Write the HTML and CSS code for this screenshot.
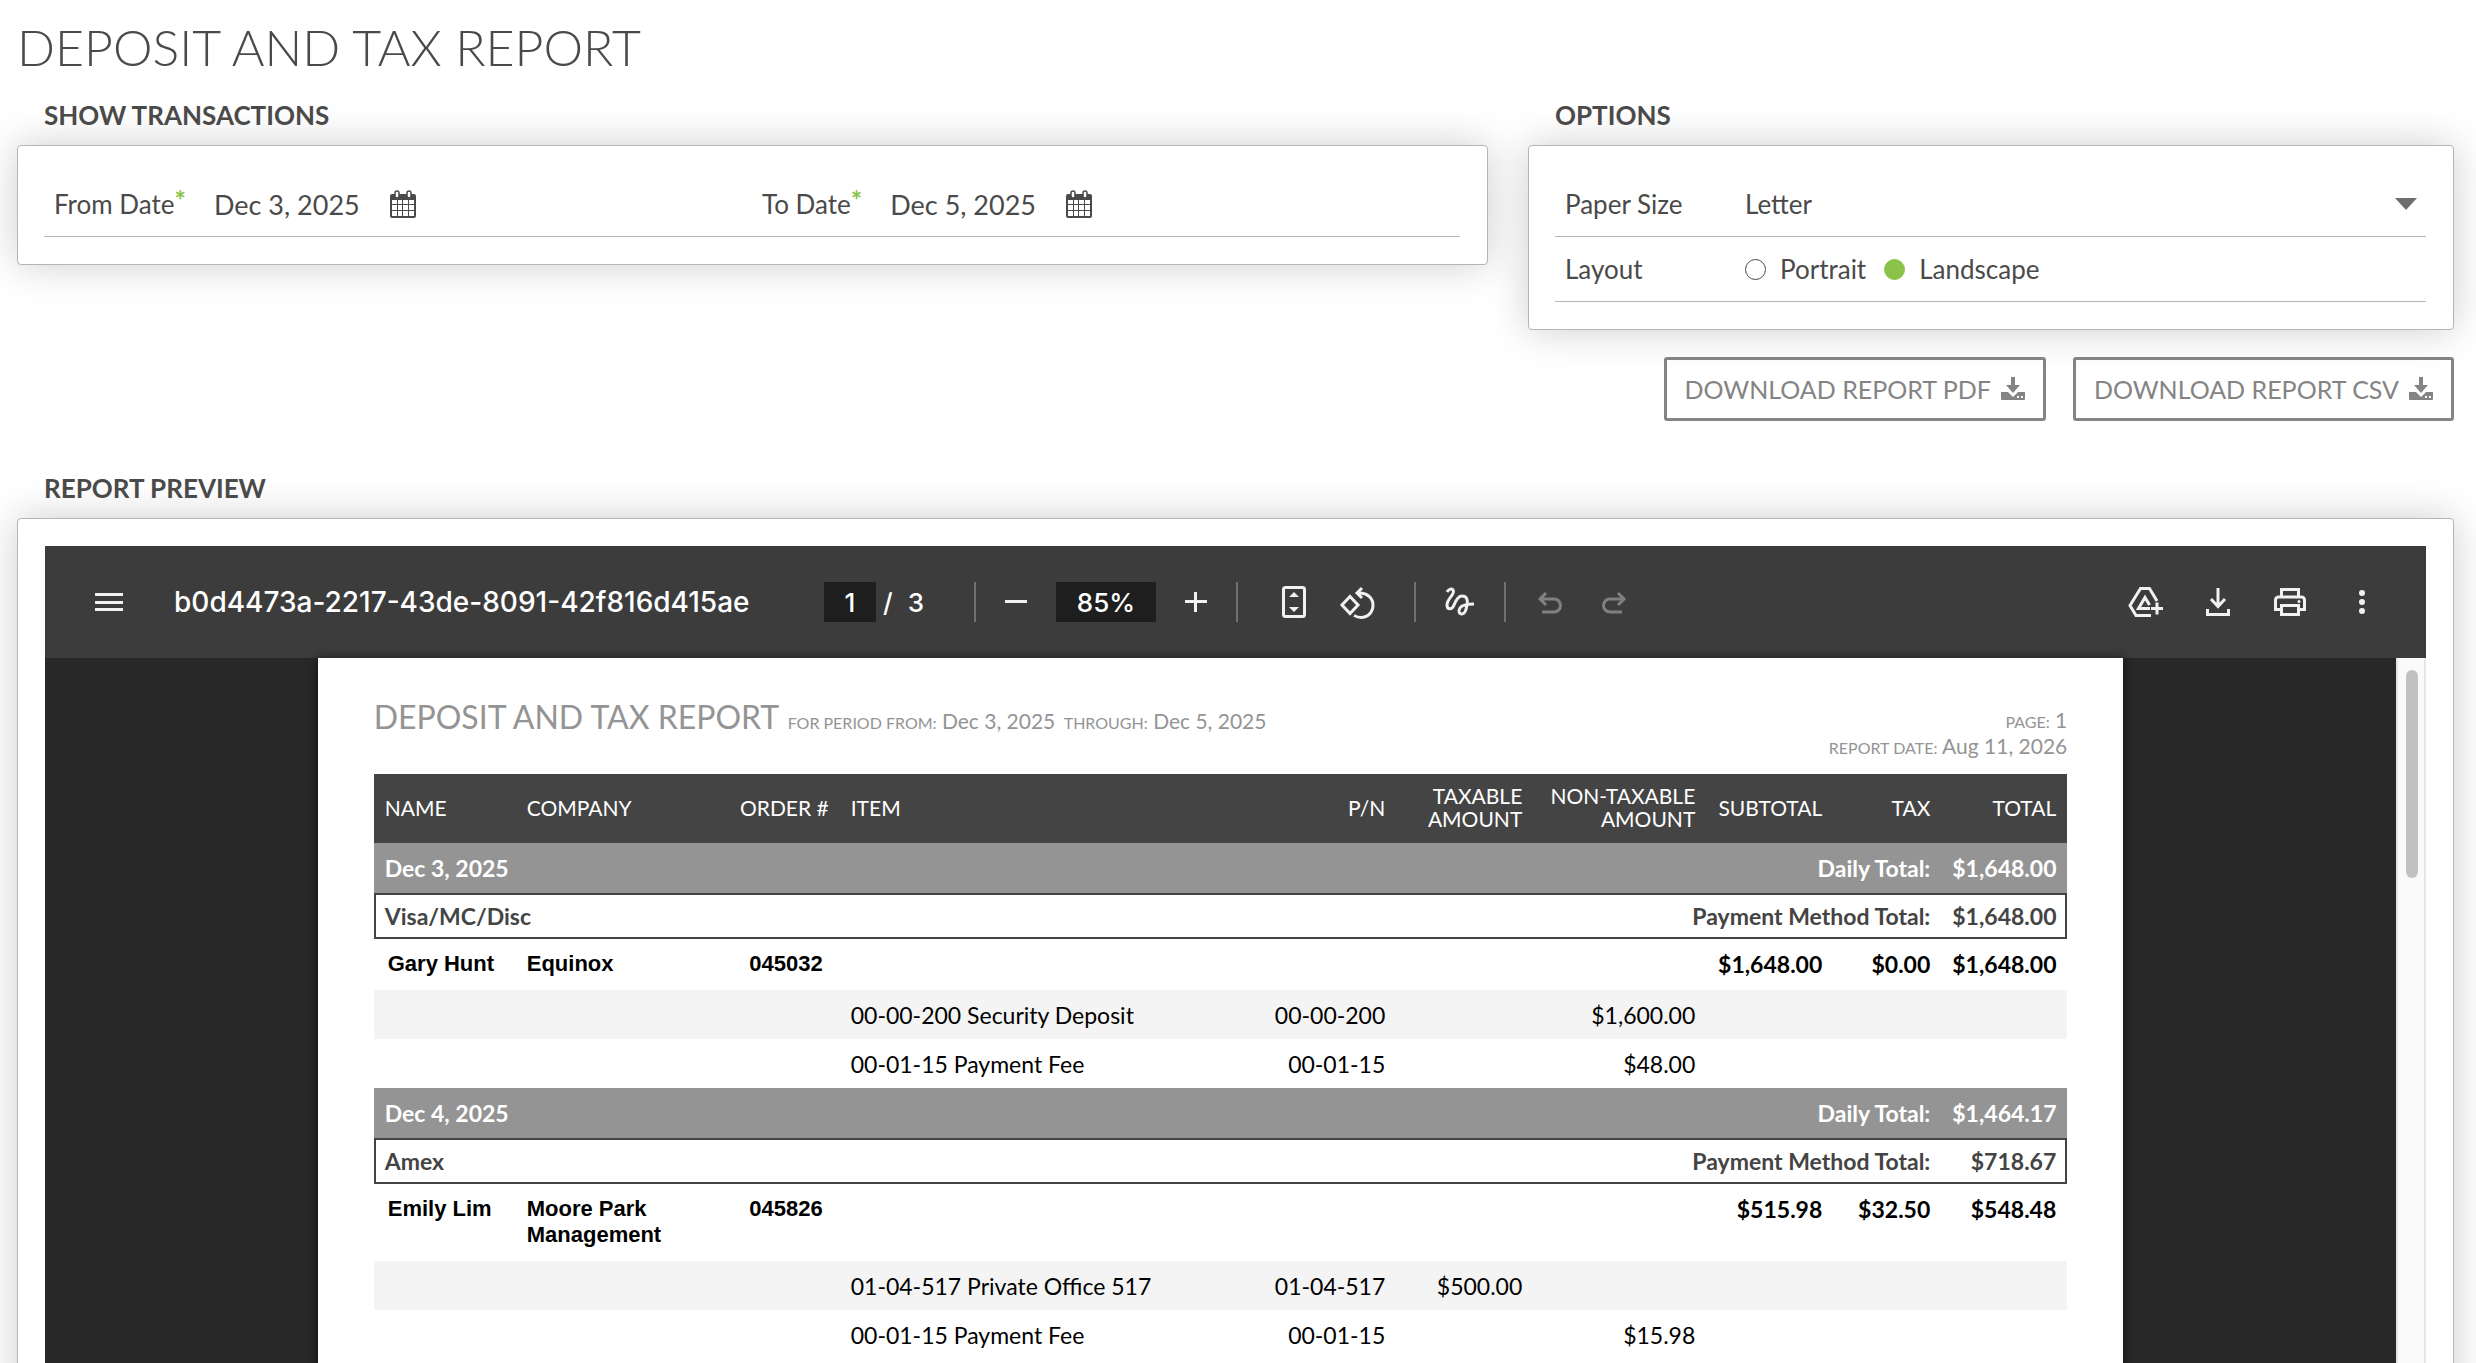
FILE: index.html
```html
<!DOCTYPE html>
<html lang="en">
<head>
  <meta charset="UTF-8">
  <meta name="viewport" content="width=device-width, initial-scale=1.0">
  <title>Deposit and Tax Report</title>
  <link rel="stylesheet" href="styles.css">
</head>
<body>
  <h1>DEPOSIT AND TAX REPORT</h1>

  <div class="filters">
    <section>
      <h2>SHOW TRANSACTIONS</h2>
      <div class="card">
        <div class="row dates">
          <div class="field">
            <label for="from-date">From Date<sup>*</sup></label>
            <input type="text" id="from-date" value="Dec 3, 2025">
            <button class="cal-btn" aria-label="Pick from date">
              <svg width="28" height="28" viewBox="0 0 28 28"><path fill="#4a4a4a" d="M3 4h22a2 2 0 0 1 2 2v20a2 2 0 0 1-2 2H3a2 2 0 0 1-2-2V6a2 2 0 0 1 2-2z"/><path fill="#fff" d="M3 10h5v4H3zm6 0h4v4H9zm5 0h5v4h-5zm6 0h5v4h-5zM3 15h5v5H3zm6 0h4v5H9zm5 0h5v5h-5zm6 0h5v5h-5zM3 21h5v5H3zm6 0h4v5H9zm5 0h5v5h-5zm6 0h5v5h-5z"/><path fill="#fff" stroke="#4a4a4a" stroke-width="1.5" d="M6 3a2 2 0 0 1 4 0v3a2 2 0 0 1-4 0zm12 0a2 2 0 0 1 4 0v3a2 2 0 0 1-4 0z"/></svg>
            </button>
          </div>
          <div class="field">
            <label for="to-date">To Date<sup>*</sup></label>
            <input type="text" id="to-date" value="Dec 5, 2025">
            <button class="cal-btn" aria-label="Pick to date">
              <svg width="28" height="28" viewBox="0 0 28 28"><path fill="#4a4a4a" d="M3 4h22a2 2 0 0 1 2 2v20a2 2 0 0 1-2 2H3a2 2 0 0 1-2-2V6a2 2 0 0 1 2-2z"/><path fill="#fff" d="M3 10h5v4H3zm6 0h4v4H9zm5 0h5v4h-5zm6 0h5v4h-5zM3 15h5v5H3zm6 0h4v5H9zm5 0h5v5h-5zm6 0h5v5h-5zM3 21h5v5H3zm6 0h4v5H9zm5 0h5v5h-5zm6 0h5v5h-5z"/><path fill="#fff" stroke="#4a4a4a" stroke-width="1.5" d="M6 3a2 2 0 0 1 4 0v3a2 2 0 0 1-4 0zm12 0a2 2 0 0 1 4 0v3a2 2 0 0 1-4 0z"/></svg>
            </button>
          </div>
        </div>
      </div>
    </section>

    <section>
      <h2>OPTIONS</h2>
      <div class="card">
        <div class="row option">
          <label for="paper-size">Paper Size</label>
          <div class="select-wrap">
            <select id="paper-size">
              <option>Letter</option>
              <option>A4</option>
            </select>
            <svg width="24" height="12" viewBox="0 0 24 12"><path fill="#6e6e6e" d="M1 0h22L12 12z"/></svg>
          </div>
        </div>
        <div class="row option">
          <span>Layout</span>
          <div class="radios">
            <label><input type="radio" name="layout"> Portrait</label>
            <label><input type="radio" name="layout" checked> Landscape</label>
          </div>
        </div>
      </div>
      <div class="downloads">
        <button>DOWNLOAD REPORT PDF
          <svg width="24" height="24" viewBox="0 0 24 24" fill="#848484"><path d="M10 0h4v8h5l-7 8-7-8h5z"/><path fill-rule="evenodd" d="M0 15h7l5 5 5-5h7v7a1 1 0 0 1-1 1H1a1 1 0 0 1-1-1zm16 4v2h2v-2zm4 0v2h2v-2z"/></svg>
        </button>
        <button>DOWNLOAD REPORT CSV
          <svg width="24" height="24" viewBox="0 0 24 24" fill="#848484"><path d="M10 0h4v8h5l-7 8-7-8h5z"/><path fill-rule="evenodd" d="M0 15h7l5 5 5-5h7v7a1 1 0 0 1-1 1H1a1 1 0 0 1-1-1zm16 4v2h2v-2zm4 0v2h2v-2z"/></svg>
        </button>
      </div>
    </section>
  </div>

  <section class="preview">
    <h2>REPORT PREVIEW</h2>
    <div class="card viewer-card">
      <div class="toolbar">
        <div class="tools-left">
          <button aria-label="Menu">
            <svg width="28" height="20" viewBox="0 0 28 20" fill="#f1f1f1"><path d="M0 1h28v3H0zm0 8h28v3H0zm0 7h28v3H0z"/></svg>
          </button>
          <span class="file-name">b0d4473a-2217-43de-8091-42f816d415ae</span>
        </div>
        <div class="tools-mid">
          <input class="page-input" type="text" value="1" aria-label="Page">
          <span class="page-count"><span>/</span><span>3</span></span>
          <i class="sep"></i>
          <button aria-label="Zoom out"><svg width="40" height="40" viewBox="0 0 40 40" fill="#f1f1f1"><path d="M9 18h22v3H9z"/></svg></button>
          <input class="zoom-input" type="text" value="85%" aria-label="Zoom">
          <button class="zoom-in" aria-label="Zoom in"><svg width="40" height="40" viewBox="0 0 40 40" fill="#f1f1f1"><path d="M9 18h9V10h3v8h10v3H21v9h-3v-9H9z"/></svg></button>
          <i class="sep"></i>
          <button class="fit" aria-label="Fit to page"><svg width="40" height="40" viewBox="0 0 40 40"><rect x="9.5" y="5.5" width="21" height="29" rx="2" fill="none" stroke="#f1f1f1" stroke-width="3"/><path fill="#f1f1f1" d="M20 10l5 5H15zm0 20l5-5H15z"/></svg></button>
          <button class="rotate" aria-label="Rotate"><svg width="40" height="40" viewBox="0 0 40 40" fill="none" stroke="#f1f1f1" stroke-width="3"><path d="M12 14.500l8 8.500-8 8.500-8-8.500z"/><path d="M24 6l-5 5 5 5M20 11h2c7 0 13 5 13 12s-5 12.500-12 12.500c-3 0-5-1-7-2"/></svg></button>
          <i class="sep"></i>
          <button class="draw" aria-label="Draw"><svg width="40" height="40" viewBox="0 0 40 40" fill="none" stroke="#f1f1f1" stroke-width="3"><path d="M7 10c2-3 5-4 6-2 3 4-6 8-6 15 0 5 5 5 7 0 2-5 4-9 8-9 5 0 6 4 5 9-1 6-3 9-5 9-3 0-4-3-2-6 2-3 6-4 14-4"/></svg></button>
          <i class="sep"></i>
          <button class="undo" aria-label="Undo"><svg width="40" height="40" viewBox="0 0 40 40" fill="none" stroke="#808080" stroke-width="3"><path d="M16 11l-6 6 6 6M10 17h14a6.500 6.500 0 0 1 0 13H12"/></svg></button>
          <button class="redo" aria-label="Redo"><svg width="40" height="40" viewBox="0 0 40 40" fill="none" stroke="#808080" stroke-width="3"><path d="M24 11l6 6-6 6M30 17H16a6.500 6.500 0 0 0 0 13h12"/></svg></button>
        </div>
        <div class="tools-right">
          <button aria-label="Save to Drive"><svg width="40" height="40" viewBox="0 0 40 40" fill="none" stroke="#f1f1f1" stroke-width="3"><path d="M25 33.500H10l-6-10L14.500 6.500h9L31 19"/><path d="M24 26.500H12.500l6.500-11 4.500 7.500M31 20.500v12M25 26.500h12"/></svg></button>
          <button aria-label="Download"><svg width="40" height="40" viewBox="0 0 40 40" fill="none" stroke="#f1f1f1" stroke-width="3"><path d="M20 6v19M13 17l7 7.500 7-7.500M9.500 27v5.500h21V27"/></svg></button>
          <button aria-label="Print"><svg width="40" height="40" viewBox="0 0 40 40" fill="none" stroke="#f1f1f1" stroke-width="3"><path d="M11.500 15V7.500h17V15M11.500 27.500h-6V18a3 3 0 0 1 3-3h23a3 3 0 0 1 3 3v9.500h-6"/><path d="M11.500 23.500h17v9h-17z"/><circle cx="29" cy="19.500" r="1.500" fill="#f1f1f1" stroke="none"/></svg></button>
          <button aria-label="More"><svg width="40" height="40" viewBox="0 0 40 40" fill="#f1f1f1"><circle cx="20" cy="11" r="3"/><circle cx="20" cy="20" r="3"/><circle cx="20" cy="29" r="3"/></svg></button>
        </div>
      </div>

      <div class="viewport">
        <div class="stage">
          <div class="paper">
            <div class="doc-head">
              <div><span class="doc-title">DEPOSIT AND TAX REPORT</span> <small>FOR PERIOD FROM:</small> Dec 3, 2025 <small>THROUGH:</small> Dec 5, 2025</div>
              <div class="doc-meta"><small>PAGE:</small> 1<br><small>REPORT DATE:</small> Aug 11, 2026</div>
            </div>
            <table>
              <colgroup>
                <col class="c-name"><col class="c-company"><col class="c-order"><col><col class="c-pn"><col class="c-taxable"><col class="c-nontax"><col class="c-sub"><col class="c-tax"><col class="c-total">
              </colgroup>
              <thead>
                <tr>
                  <th class="l">NAME</th><th class="l">COMPANY</th><th>ORDER #</th><th class="l">ITEM</th><th>P/N</th><th>TAXABLE AMOUNT</th><th>NON-TAXABLE AMOUNT</th><th>SUBTOTAL</th><th>TAX</th><th>TOTAL</th>
                </tr>
              </thead>
              <tbody>
                <tr class="day"><td class="l" colspan="5">Dec 3, 2025</td><td colspan="4">Daily Total:</td><td>$1,648.00</td></tr>
                <tr class="method"><td class="l" colspan="5">Visa/MC/Disc</td><td colspan="4">Payment Method Total:</td><td>$1,648.00</td></tr>
                <tr class="customer"><td class="l who">Gary Hunt</td><td class="l org">Equinox</td><td class="num">045032</td><td></td><td></td><td></td><td></td><td>$1,648.00</td><td>$0.00</td><td>$1,648.00</td></tr>
                <tr class="item shade"><td></td><td></td><td></td><td class="l">00-00-200 Security Deposit</td><td>00-00-200</td><td></td><td>$1,600.00</td><td></td><td></td><td></td></tr>
                <tr class="item"><td></td><td></td><td></td><td class="l">00-01-15 Payment Fee</td><td>00-01-15</td><td></td><td>$48.00</td><td></td><td></td><td></td></tr>
                <tr class="day"><td class="l" colspan="5">Dec 4, 2025</td><td colspan="4">Daily Total:</td><td>$1,464.17</td></tr>
                <tr class="method"><td class="l" colspan="5">Amex</td><td colspan="4">Payment Method Total:</td><td>$718.67</td></tr>
                <tr class="customer"><td class="l who">Emily Lim</td><td class="l org">Moore Park Management</td><td class="num">045826</td><td></td><td></td><td></td><td></td><td>$515.98</td><td>$32.50</td><td>$548.48</td></tr>
                <tr class="item shade"><td></td><td></td><td></td><td class="l">01-04-517 Private Office 517</td><td>01-04-517</td><td>$500.00</td><td></td><td></td><td></td><td></td></tr>
                <tr class="item"><td></td><td></td><td></td><td class="l">00-01-15 Payment Fee</td><td>00-01-15</td><td></td><td>$15.98</td><td></td><td></td><td></td></tr>
              </tbody>
            </table>
          </div>
        </div>
        <div class="scrollbar"><div class="thumb"></div></div>
      </div>
    </div>
  </section>
</body>
</html>
```
FILE: styles.css
```css
* {
  box-sizing: border-box;
}
body {
  margin: 0;
  padding: 17px 22px 0 17px;
  height: 100vh;
  overflow: hidden;
  display: flex;
  flex-direction: column;
  background-color: #fff;
  color: #4a4a4a;
  font-family: Lato, "Liberation Sans", sans-serif;
  font-size: 26px;
}
h1 {
  margin: 0 0 22px;
  font-size: 50px;
  line-height: 60px;
  font-weight: 300;
}
h2 {
  margin: 0 0 14px 27px;
  font-size: 26px;
  line-height: 32px;
  font-weight: 700;
}
button {
  padding: 0;
  border: none;
  background: none;
  font: inherit;
  color: inherit;
  cursor: pointer;
}
input,
select {
  border: none;
  background: none;
  padding: 0;
  font: inherit;
  color: inherit;
}
svg {
  display: block;
}

/* filters */
.filters {
  display: grid;
  grid-template-columns: 1471fr 926fr;
  gap: 40px;
  align-items: start;
}
.card {
  padding: 26px 27px 27px 26px;
  background-color: #fff;
  border: 1px solid #b5b5b5;
  border-radius: 4px;
  box-shadow: 0 0 40px rgba(0, 0, 0, 0.2);
}
.row {
  height: 65px;
  border-bottom: 1px solid #b5b5b5;
}
.dates {
  display: grid;
  grid-template-columns: 1fr 1fr;
}
.field {
  display: flex;
  align-items: center;
  padding-left: 10px;
}
.field input {
  width: 150px;
  margin: 0 25px 0 28px;
  font-size: 27px;
}
.field sup {
  color: #8bc34a;
  font-size: 27px;
  font-weight: 700;
  line-height: 0;
  vertical-align: 4px;
}
.option {
  display: grid;
  grid-template-columns: 180px 1fr;
  align-items: center;
  padding-left: 10px;
}
.select-wrap {
  display: flex;
  align-items: center;
  padding-right: 8px;
}
.select-wrap select {
  flex: 1;
  appearance: none;
}
.radios {
  display: flex;
  gap: 18px;
}
.radios label {
  display: flex;
  align-items: center;
  gap: 14px;
}
.radios input {
  appearance: none;
  width: 21px;
  height: 21px;
  margin: 0;
  border: 1px solid #4a4a4a;
  border-radius: 50%;
}
.radios input:checked {
  background-color: #8bc34a;
  border-color: #8bc34a;
}
.downloads {
  display: flex;
  justify-content: flex-end;
  gap: 27px;
  margin-top: 27px;
}
.downloads button {
  display: flex;
  align-items: center;
  justify-content: center;
  gap: 10px;
  height: 64px;
  padding: 0 18px;
  border: 3px solid #848484;
  border-radius: 3px;
  color: #848484;
  font-size: 25px;
}

/* pdf viewer */
.preview {
  flex: 1;
  margin-top: 51px;
}
.viewer-card {
  height: 1200px;
  display: flex;
  flex-direction: column;
  padding: 27px;
}
.toolbar {
  display: flex;
  align-items: center;
  height: 112px;
  padding: 0 44px 0 50px;
  background-color: #3c3c3c;
  color: #fff;
  font-family: Inter, Roboto, sans-serif;
  font-weight: 500;
}
.tools-left {
  display: flex;
  align-items: center;
  gap: 51px;
  width: 729px;
}
.file-name {
  font-size: 28px;
}
.tools-mid,
.tools-right {
  display: flex;
  align-items: center;
}
.tools-right {
  margin-left: auto;
  gap: 32px;
}
.page-input,
.zoom-input {
  height: 40px;
  background-color: #1e1e1e;
  text-align: center;
}
.page-input {
  width: 52px;
}
.zoom-input {
  width: 100px;
  margin: 0 20px;
}
.page-count {
  display: flex;
  gap: 15px;
  width: 98px;
  padding-left: 7px;
}
.sep {
  width: 2px;
  height: 40px;
  margin-right: 20px;
  background-color: #707070;
}
.zoom-in {
  margin-right: 20px;
}
.fit {
  margin: 0 24px 0 16px;
}
.rotate {
  margin-right: 36px;
}
.draw {
  margin: 0 24px 0 4px;
}
.undo {
  margin-left: 4px;
}
.redo {
  margin-left: 24px;
}
.viewport {
  flex: 1;
  display: flex;
  background-color: #282828;
}
.stage {
  flex: 1;
  display: flex;
  justify-content: center;
}
.paper {
  width: 76.8%;
  padding: 39px 56px 0;
  background-color: #fff;
  box-shadow: 0 0 10px rgba(0, 0, 0, 0.6);
  color: #000;
}
.scrollbar {
  width: 30px;
  padding: 12px 6px 0 8px;
  background-color: #fafafa;
  border-left: 2px solid #e6e6e6;
  border-right: 2px solid #e6e6e6;
}
.thumb {
  height: 208px;
  border-radius: 8px;
  background-color: #c1c1c1;
}

/* report page */
.doc-head {
  display: flex;
  justify-content: space-between;
  height: 77px;
  color: #949494;
  font-size: 21px;
}
.doc-title {
  font-size: 32px;
}
.doc-head small {
  margin-left: 3px;
  font-size: 16px;
}
.doc-meta {
  padding-top: 11px;
  line-height: 24px;
  text-align: right;
}
table {
  width: 100%;
  table-layout: fixed;
  border-collapse: collapse;
  font-size: 23px;
}
.c-name { width: 142px; }
.c-company { width: 202px; }
.c-order { width: 122px; }
.c-pn { width: 140px; }
.c-taxable { width: 137px; }
.c-nontax { width: 173px; }
.c-sub { width: 127px; }
.c-tax { width: 108px; }
.c-total { width: 126px; }
th,
td {
  padding: 0 11px;
  text-align: right;
}
.l {
  text-align: left;
}
th {
  height: 69px;
  padding-bottom: 3px;
  background-color: #444;
  color: #fff;
  font-size: 21px;
  line-height: 23px;
  font-weight: 400;
}
.day td {
  height: 50px;
  background-color: #949494;
  color: #fff;
  font-weight: 700;
}
.method {
  outline: 2px solid #444;
  outline-offset: -2px;
}
.method td {
  height: 46px;
  color: #444;
  font-weight: 700;
}
.customer td {
  padding-top: 12px;
  padding-bottom: 13px;
  line-height: 26px;
  font-weight: 700;
  vertical-align: top;
}
.customer .who,
.customer .org,
.customer .num {
  font-family: "Liberation Sans", sans-serif;
  font-size: 22px;
}
.customer .who {
  padding-left: 14px;
  padding-right: 0;
}
.customer .num {
  padding-right: 17px;
}
.item td {
  height: 49px;
}
.shade td {
  background-color: #f4f4f4;
}
```
